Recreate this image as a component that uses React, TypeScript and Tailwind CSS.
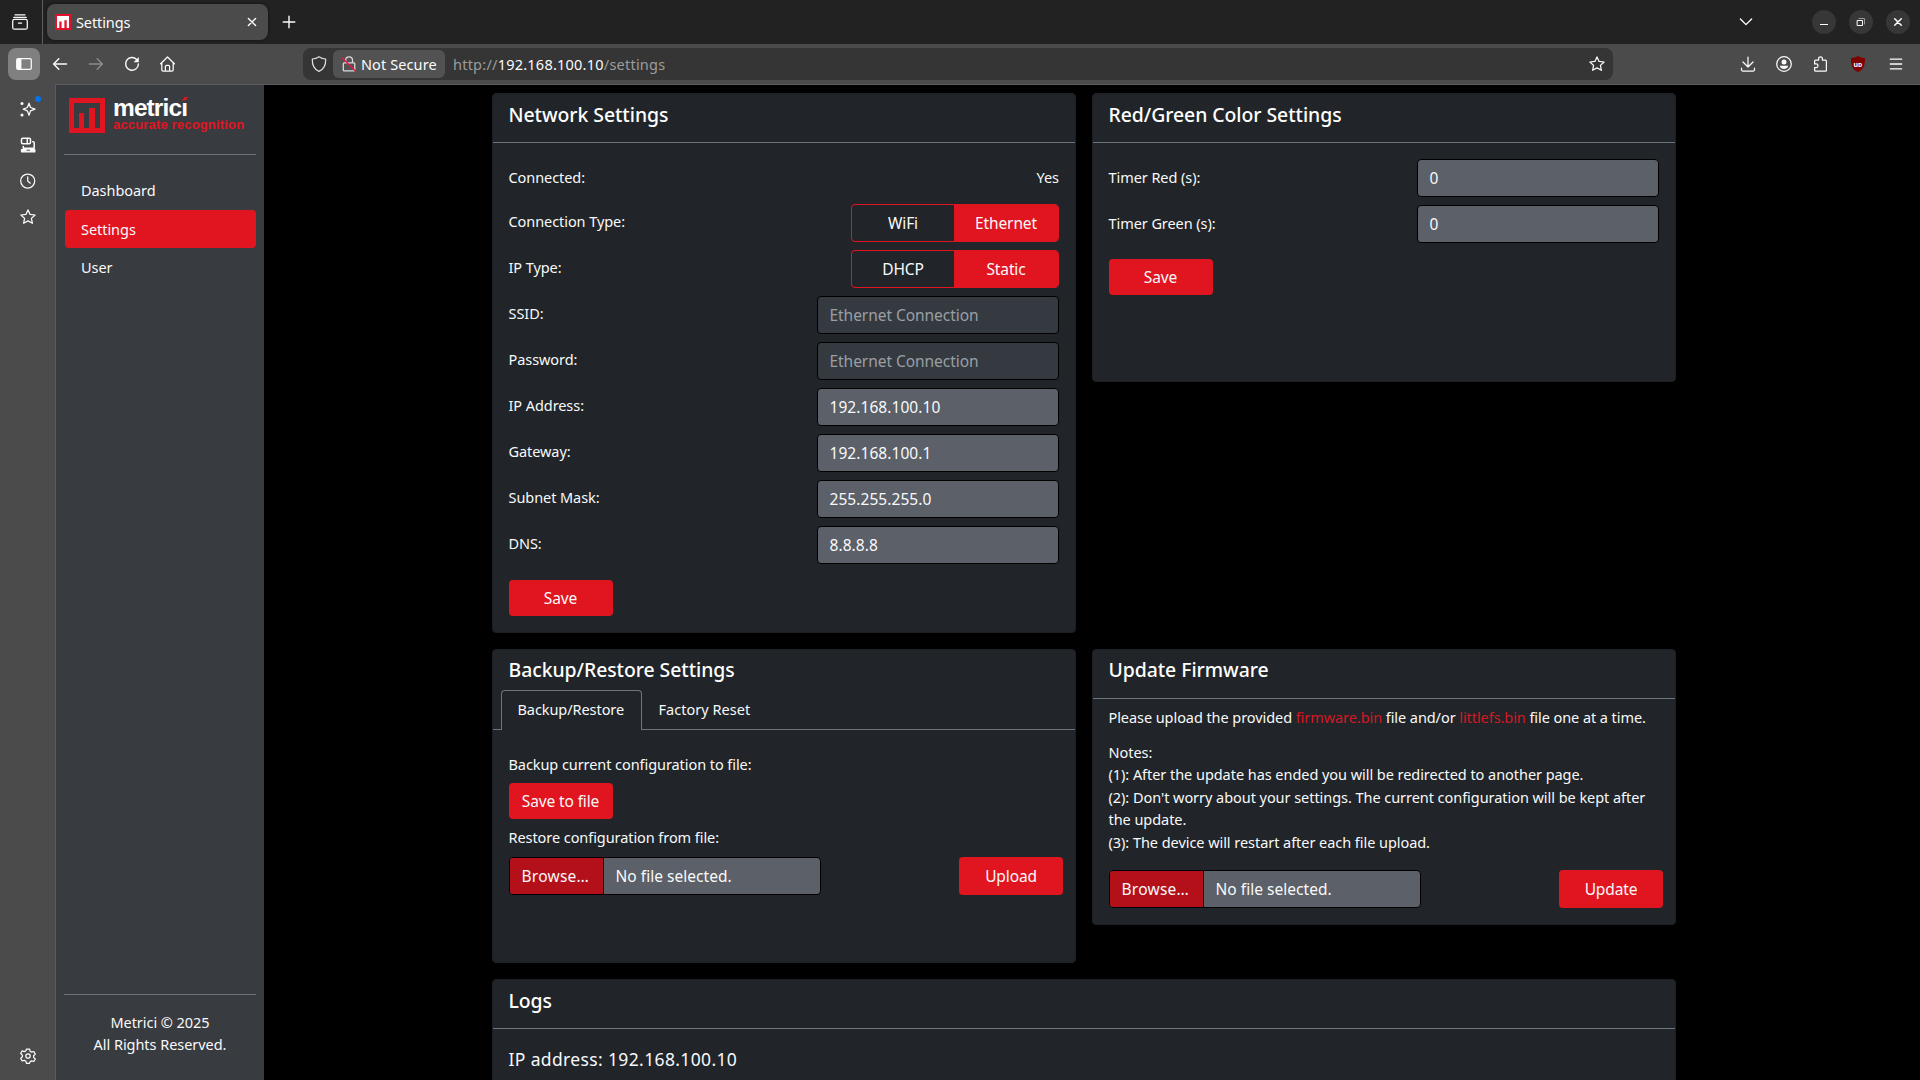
import type { ReactNode } from "react";
import clsx from "clsx";

function Icon({ children, size = 16, className }: { children: ReactNode; size?: number; className?: string }) {
  return (
    <svg
      width={size}
      height={size}
      viewBox="0 0 16 16"
      fill="none"
      stroke="currentColor"
      strokeWidth={1.25}
      strokeLinecap="round"
      strokeLinejoin="round"
      className={clsx("shrink-0", className)}
    >
      {children}
    </svg>
  );
}

const STAR = "M8 .9l2.1 4.5 5 .6-3.7 3.4 1 4.9L8 11.9l-4.4 2.4 1-4.9L.9 6l5-.6z";

function TitleBar() {
  return (
    <div className="flex h-11 items-center bg-[#222222] text-[#fbfbfe]">
      <div className="flex h-full w-[43px] items-center border-r border-[#5e5e5e] pl-3">
        <Icon>
          <path d="M3 .8h10M1.8 3.4h12.4" />
          <rect x=".7" y="5.4" width="14.6" height="9.8" rx="1.8" />
          <path d="M6.4 9h3.2" />
        </Icon>
      </div>
      <div className="ml-1 flex h-9 w-[221px] items-center rounded-lg bg-[#4b4b4b] pl-2 pr-2.5 shadow-[0_0_3px_rgba(0,0,0,0.6)]">
        <svg width="16" height="16" viewBox="0 0 16 16" className="shrink-0">
          <path fill="#e4112b" d="M0 0h16v16H0z" />
          <path fill="#fff" d="M2 2h12v12h-2.3V6.3H9.4V14H6.6V7.5H4.3V14H2z" />
        </svg>
        <span className="ml-[5px] flex-1 pt-px text-[14.5px] tracking-[-0.1px]">Settings</span>
        <Icon size={12}>
          <path strokeWidth="1.9" d="M3.2 3.2l9.6 9.6M12.8 3.2l-9.6 9.6" />
        </Icon>
      </div>
      <Icon size={14} className="ml-[14px]">
        <path strokeWidth="1.6" d="M8 1.4v13.2M1.4 8h13.2" />
      </Icon>
      <Icon size={14} className="ml-auto mr-[59px]">
        <path strokeWidth="1.6" d="M1.6 4.6L8 11l6.4-6.4" />
      </Icon>
      <div className="mr-[10px] flex gap-[13px]">
        <div className="flex size-6 items-center justify-center rounded-full bg-[#373737]">
          <Icon>
            <path strokeLinecap="butt" strokeWidth="1" d="M4 10.5h8" />
          </Icon>
        </div>
        <div className="flex size-6 items-center justify-center rounded-full bg-[#373737]">
          <Icon>
            <path strokeLinejoin="miter" strokeWidth="1" d="M4.5 6.5h5v5h-5z" />
            <path strokeLinejoin="miter" strokeWidth="1" stroke="#999" d="M6 4.5h5.5V10" />
          </Icon>
        </div>
        <div className="flex size-6 items-center justify-center rounded-full bg-[#373737]">
          <Icon>
            <path strokeWidth="1.5" d="M4.7 4.7l6.6 6.6M11.3 4.7l-6.6 6.6" />
          </Icon>
        </div>
      </div>
    </div>
  );
}

function NavBar() {
  return (
    <div className="flex h-10 items-center bg-[#4b4b4b] pl-2 text-[#fbfbfe]">
      <div className="flex size-8 items-center justify-center rounded-lg bg-[#808080]">
        <Icon>
          <rect x=".7" y="2.7" width="14.6" height="10.6" rx="1.4" />
          <path fill="currentColor" stroke="none" d="M1 3h4.4v10H1z" />
        </Icon>
      </div>
      <Icon className="ml-3">
        <path strokeWidth="1.5" d="M14.5 8H1.7M6.8 2.8L1.6 8l5.2 5.2" />
      </Icon>
      <Icon className="ml-5 text-[#8b8b8b]">
        <path strokeWidth="1.5" d="M1.5 8h12.8M9.2 2.8L14.4 8l-5.2 5.2" />
      </Icon>
      <Icon className="ml-5">
        <path strokeWidth="1.4" d="M12.6 3.4A6.4 6.4 0 1 0 14.4 8" />
        <path fill="currentColor" stroke="none" d="M14.8 1v5.2H9.6z" />
      </Icon>
      <Icon className="ml-5">
        <path d="M.6 7.8L7.5 1l6.9 6.8M1.8 6.6v7.1c0 .8.5 1.3 1.3 1.3h8.8c.8 0 1.3-.5 1.3-1.3V6.6M5.4 15v-4.4c0-.8.5-1.3 1.3-1.3h1.6c.8 0 1.3.5 1.3 1.3V15" />
      </Icon>

      <div className="ml-[127px] flex h-8 w-[1310px] items-center rounded-lg bg-[#353535] text-[14.5px]">
        <Icon className="ml-2 text-[#dcdcdc]">
          <path d="M8 .8c2.1 1.5 4.3 2.1 6.7 2.2C14.9 8.5 13 13.3 8 15.3 3 13.3 1.1 8.5 1.3 3 3.7 2.9 5.9 2.3 8 .8z" />
        </Icon>
        <div className="ml-1.5 flex h-7 w-28 items-center rounded-md bg-[#525252] pl-2">
          <Icon className="text-[#dcdcdc]">
            <path d="M4.7 6.7V4.2a3.4 3.4 0 0 1 6.8 0v2.5M3.3 6.8h9.5c.6 0 1 .4 1 1v6.1c0 .6-.4 1-1 1H3.3c-.6 0-1-.4-1-1V7.8c0-.6.4-1 1-1z" />
            <path stroke="#e8184a" strokeWidth="1.5" d="M1 1.8L14.5 15" />
          </Icon>
          <span className="ml-[4px] whitespace-nowrap pt-px tracking-[0.1px]">Not Secure</span>
        </div>
        <span className="ml-2 pt-px tracking-[0.23px] text-[#9c9c9c]">
          http://<span className="text-[#fbfbfe]">192.168.100.10</span>/settings
        </span>
        <Icon className="ml-auto mr-2">
          <path d={STAR} />
        </Icon>
      </div>

      <Icon className="ml-auto">
        <path d="M8 1v9.5M3 6l5 5 5-5M1.5 12.2v1.6c0 .8.5 1.2 1.2 1.2h10.6c.7 0 1.2-.4 1.2-1.2v-1.6" />
      </Icon>
      <Icon className="ml-5">
        <circle cx="8" cy="8" r="7.3" />
        <circle cx="8" cy="6" r="2.5" fill="currentColor" stroke="none" />
        <path fill="currentColor" stroke="none" d="M3.8 9.8h8.4c0 2-1.9 3.2-4.2 3.2s-4.2-1.2-4.2-3.2z" />
      </Icon>
      <Icon className="ml-[21px]">
        <path d="M1.6 5.1c0-.6.4-1 1-1h3V2.7a1.9 1.9 0 0 1 3.8 0v1.4h3c.6 0 1 .4 1 1v9.1c0 .6-.4 1-1 1H2.6c-.6 0-1-.4-1-1v-2.7h1.6a1.8 1.8 0 0 0 0-3.6H1.6z" />
      </Icon>
      <div className="relative ml-[21px] mr-[23px] flex size-4 items-center justify-center">
        <svg width="16" height="16" viewBox="0 0 16 16" className="absolute inset-0">
          <path fill="#800000" d="M8 0c2 1.3 4 1.9 7 2 0 7-1 11.5-7 14C2 13.5 1 9 1 2c3-.1 5-.7 7-2z" />
        </svg>
        <span className="relative text-[7px] font-bold leading-none">uᴅ</span>
      </div>
      <Icon size={14} className="mr-[17px]">
        <path strokeWidth="1.5" d="M1.5 2.5h13M1.5 8h13M1.5 13.5h13" />
      </Icon>
    </div>
  );
}

function ToolRail() {
  return (
    <div className="flex w-[55px] flex-col bg-[#4b4b4b] pl-5 text-[#fbfbfe]">
      <div className="relative mt-[17px]">
        <Icon>
          <path d="M9 2.2l1.5 4.3L15 8.2l-4.5 1.7L9 14.2 7.4 9.9 3.2 8.2l4.2-1.7z" />
          <circle cx="2" cy="2.500" r="1.5" fill="currentColor" stroke="none" />
          <circle cx="2" cy="14" r="1.5" fill="currentColor" stroke="none" />
        </Icon>
        <span className="absolute -top-[5px] left-[15px] size-1.5 rounded-full bg-[#0074e8]" />
      </div>
      <Icon className="mt-5">
        <rect x="1.5" y="1.2" width="9" height="5.6" rx="1.2" strokeWidth="1.5" />
        <path strokeWidth="1.5" d="M7.3 1.5v5M12.7 4.8h.5c.6 0 1 .4 1 1v5.4H3.3V9.5" />
        <path fill="currentColor" d="M1.5 12.5h13.3v2.3H1.5z" />
        <path stroke="#4b4b4b" strokeWidth="1" d="M7 13.2h2.5" />
      </Icon>
      <Icon className="mt-5">
        <circle cx="7.7" cy="8" r="7" />
        <path d="M7.7 3.8V8l2.6 2.2" />
      </Icon>
      <Icon className="mt-5">
        <path d={STAR} />
      </Icon>
      <Icon className="mb-4 mt-auto">
        <path d="M6.5 1h3l.6 2.2 1.5.9 2.2-.6 1.5 2.6-1.7 1.6v1.7l1.7 1.6-1.5 2.5-2.2-.6-1.5.9-.6 1.5h-3l-.6-2.1-1.5-.9-2.2.6L.7 10.4l1.7-1.6V7.1L.7 5.5l1.5-2.6 2.2.7 1.5-.9z" />
        <circle cx="8" cy="8" r="2.2" />
      </Icon>
    </div>
  );
}

function Logo() {
  return (
    <div className="ml-[5px] mt-[5px] flex h-9 gap-2 font-['Liberation_Sans',sans-serif] font-bold">
      <svg width="36" height="36" viewBox="0 0 36 36" className="shrink-0">
        <path fill="#e11520" fillRule="evenodd" d="M0 0h36v35H0zM5 5v25h5V15h5v15h5V10h6v20h5V5z" />
      </svg>
      <div className="relative">
        <div className="text-[24.5px] leading-[19px] tracking-[-0.9px] text-white">metricı</div>
        <div className="whitespace-nowrap text-[13px] leading-[15px] tracking-[0.17px] text-[#e11520]">
          accurate recognition
        </div>
        <svg width="7" height="4" viewBox="0 0 7 4" className="absolute -top-px left-[69px]">
          <path fill="#e11520" d="M2.5 0H6.5L3.5 3.5H0z" />
        </svg>
      </div>
    </div>
  );
}

function Sidebar() {
  return (
    <aside className="flex w-52 flex-col bg-[#383b40] p-2 text-[14.5px] leading-[22.5px] tracking-[-0.05px] text-[#f8f9fa]">
      <Logo />
      <hr className="mt-5 border-[#6d7175]" />
      <nav className="ml-px mt-4 flex flex-col gap-px">
        {["Dashboard", "Settings", "User"].map((item) => (
          <a
            key={item}
            className={clsx(
              "flex items-center rounded px-4",
              item === "Settings" ? "h-[38px] bg-[#e11520]" : item === "User" ? "h-9" : "h-[38px]",
            )}
          >
            {item}
          </a>
        ))}
      </nav>
      <div className="mt-auto border-t border-[#6d7175] pb-[17px] pt-4 text-center leading-[22px]">
        Metrici © 2025
        <br />
        All Rights Reserved.
      </div>
    </aside>
  );
}

type CardProps = { title: string; children: ReactNode; className?: string; titleClass?: string };

function Card({ title, children, className, titleClass = "pt-2" }: CardProps) {
  return (
    <section className={clsx("rounded border border-[#1c1f23] bg-[#212529]", className)}>
      <h5 className={clsx("h-12 px-[15.5px] text-[19.4px] font-medium leading-[25px] tracking-[-0.05px] text-white", titleClass)}>
        {title}
      </h5>
      {children}
    </section>
  );
}

function Button({ children, className }: { children: ReactNode; className?: string }) {
  return (
    <button
      className={clsx(
        "block h-9 w-[104px] rounded bg-[#e11520] text-[15.5px] leading-6 tracking-[-0.12px] text-[#f8f9fa]",
        className,
      )}
    >
      {children}
    </button>
  );
}

function Row({ label, children, labelClass = "pt-1.5" }: { label: string; children: ReactNode; labelClass?: string }) {
  return (
    <div className="flex justify-between">
      <span className={labelClass}>{label}</span>
      {children}
    </div>
  );
}

function Field({ value, disabled }: { value: string; disabled?: boolean }) {
  return (
    <div
      className={clsx(
        "h-[38px] w-[242px] rounded border border-black px-[11.5px] py-1.5 text-[15.5px] leading-6",
        disabled ? "bg-[#353a41] tracking-[-0.05px] text-[#9a9fa4]" : "bg-[#5c6068] tracking-[0.06px] text-[#f8f9fa]",
      )}
    >
      {value}
    </div>
  );
}

function Toggle({ options }: { options: [string, string] }) {
  return (
    <div className="flex h-[38px] w-52 overflow-hidden rounded border border-[#e11520] text-[15.5px] leading-9 tracking-[-0.12px]">
      <span className="flex-1 text-center">{options[0]}</span>
      <span className="w-[104px] bg-[#e11520] text-center">{options[1]}</span>
    </div>
  );
}

function FilePicker({ action }: { action: string }) {
  return (
    <div className="flex justify-between text-[15.5px] leading-9">
      <div className="flex h-[38px] w-[312px] overflow-hidden rounded border border-black bg-[#5c6068]">
        <span className="w-[94px] border-r border-black bg-[#b4101a] pl-3 tracking-[0.25px]">Browse…</span>
        <span className="pl-3 tracking-[0.03px]">No file selected.</span>
      </div>
      <Button className="-mr-[3.5px] h-[38px]">{action}</Button>
    </div>
  );
}

function App() {
  return (
    <div className="flex h-[1080px] w-[1920px] flex-col overflow-hidden bg-black font-['Noto_Sans',sans-serif]">
      <TitleBar />
      <NavBar />
      <div className="flex min-h-0 flex-1">
        <ToolRail />
        <div className="flex flex-1 border-l border-t border-[#5c5c5c]">
          <Sidebar />
          <main className="ml-[228px] mt-2 w-[1184px] text-[14.5px] leading-[22.5px] tracking-[-0.07px] text-[#f8f9fa]">
            <div className="grid grid-cols-2 items-start gap-4">
              <Card title="Network Settings" className="h-[540px]">
                <div className="flex flex-col gap-2 border-t border-[#6c757d] p-4 pl-[15.5px]">
                  <div className="flex h-[37px] items-center justify-between">
                    <span>Connected:</span>
                    <span>Yes</span>
                  </div>
                  <Row label="Connection Type:">
                    <Toggle options={["WiFi", "Ethernet"]} />
                  </Row>
                  <Row label="IP Type:">
                    <Toggle options={["DHCP", "Static"]} />
                  </Row>
                  <Row label="SSID:">
                    <Field value="Ethernet Connection" disabled />
                  </Row>
                  <Row label="Password:">
                    <Field value="Ethernet Connection" disabled />
                  </Row>
                  <Row label="IP Address:">
                    <Field value="192.168.100.10" />
                  </Row>
                  <Row label="Gateway:">
                    <Field value="192.168.100.1" />
                  </Row>
                  <Row label="Subnet Mask:">
                    <Field value="255.255.255.0" />
                  </Row>
                  <Row label="DNS:">
                    <Field value="8.8.8.8" />
                  </Row>
                  <Button className="mt-2">Save</Button>
                </div>
              </Card>

              <Card title="Red/Green Color Settings" className="h-[289px]">
                <div className="flex flex-col gap-2 border-t border-[#6c757d] p-4 pl-[15.5px]">
                  <Row label="Timer Red (s):" labelClass="pt-[7px]">
                    <Field value="0" />
                  </Row>
                  <Row label="Timer Green (s):" labelClass="pt-[7px]">
                    <Field value="0" />
                  </Row>
                  <Button className="mt-2">Save</Button>
                </div>
              </Card>

              <Card title="Backup/Restore Settings" className="h-[314px]" titleClass="pt-[7px]">
                <div className="-mt-2 flex h-10">
                  <span className="w-2 border-b border-[#6c757d]" />
                  <span className="w-[141px] rounded-t border border-b-0 border-[#6c757d] pl-[15.5px] pt-[7px]">
                    Backup/Restore
                  </span>
                  <span className="flex-1 border-b border-[#6c757d] px-[16.5px] pt-2 tracking-[0.03px]">Factory Reset</span>
                </div>
                <div className="px-[15.5px] pt-[23px]">
                  <p>Backup current configuration to file:</p>
                  <Button className="mt-[7px]">Save to file</Button>
                  <p className="mb-2 mt-[7.5px]">Restore configuration from file:</p>
                  <FilePicker action="Upload" />
                </div>
              </Card>

              <Card title="Update Firmware" className="h-[276px]" titleClass="pt-[7px]">
                <div className="border-t border-[#6c757d] px-[15.5px] pt-[7px]">
                  <p>
                    Please upload the provided <span className="text-[#d31823]">firmware.bin</span> file and/or{" "}
                    <span className="text-[#d31823]">littlefs.bin</span> file one at a time.
                  </p>
                  <p className="mb-[17px] mt-3 tracking-[-0.05px]">
                    Notes:
                    <br />
                    (1): After the update has ended you will be redirected to another page.
                    <br />
                    (2): Don't worry about your settings. The current configuration will be kept after the update.
                    <br />
                    (3): The device will restart after each file upload.
                  </p>
                  <FilePicker action="Update" />
                </div>
              </Card>

              <Card title="Logs" className="col-span-2 h-40">
                <div className="border-t border-[#6c757d] px-[15.5px] pt-[17px] text-[17.5px] leading-[27px] tracking-[0.36px]">
                  IP address: 192.168.100.10
                </div>
              </Card>
            </div>
          </main>
        </div>
      </div>
    </div>
  );
}

export default App;
